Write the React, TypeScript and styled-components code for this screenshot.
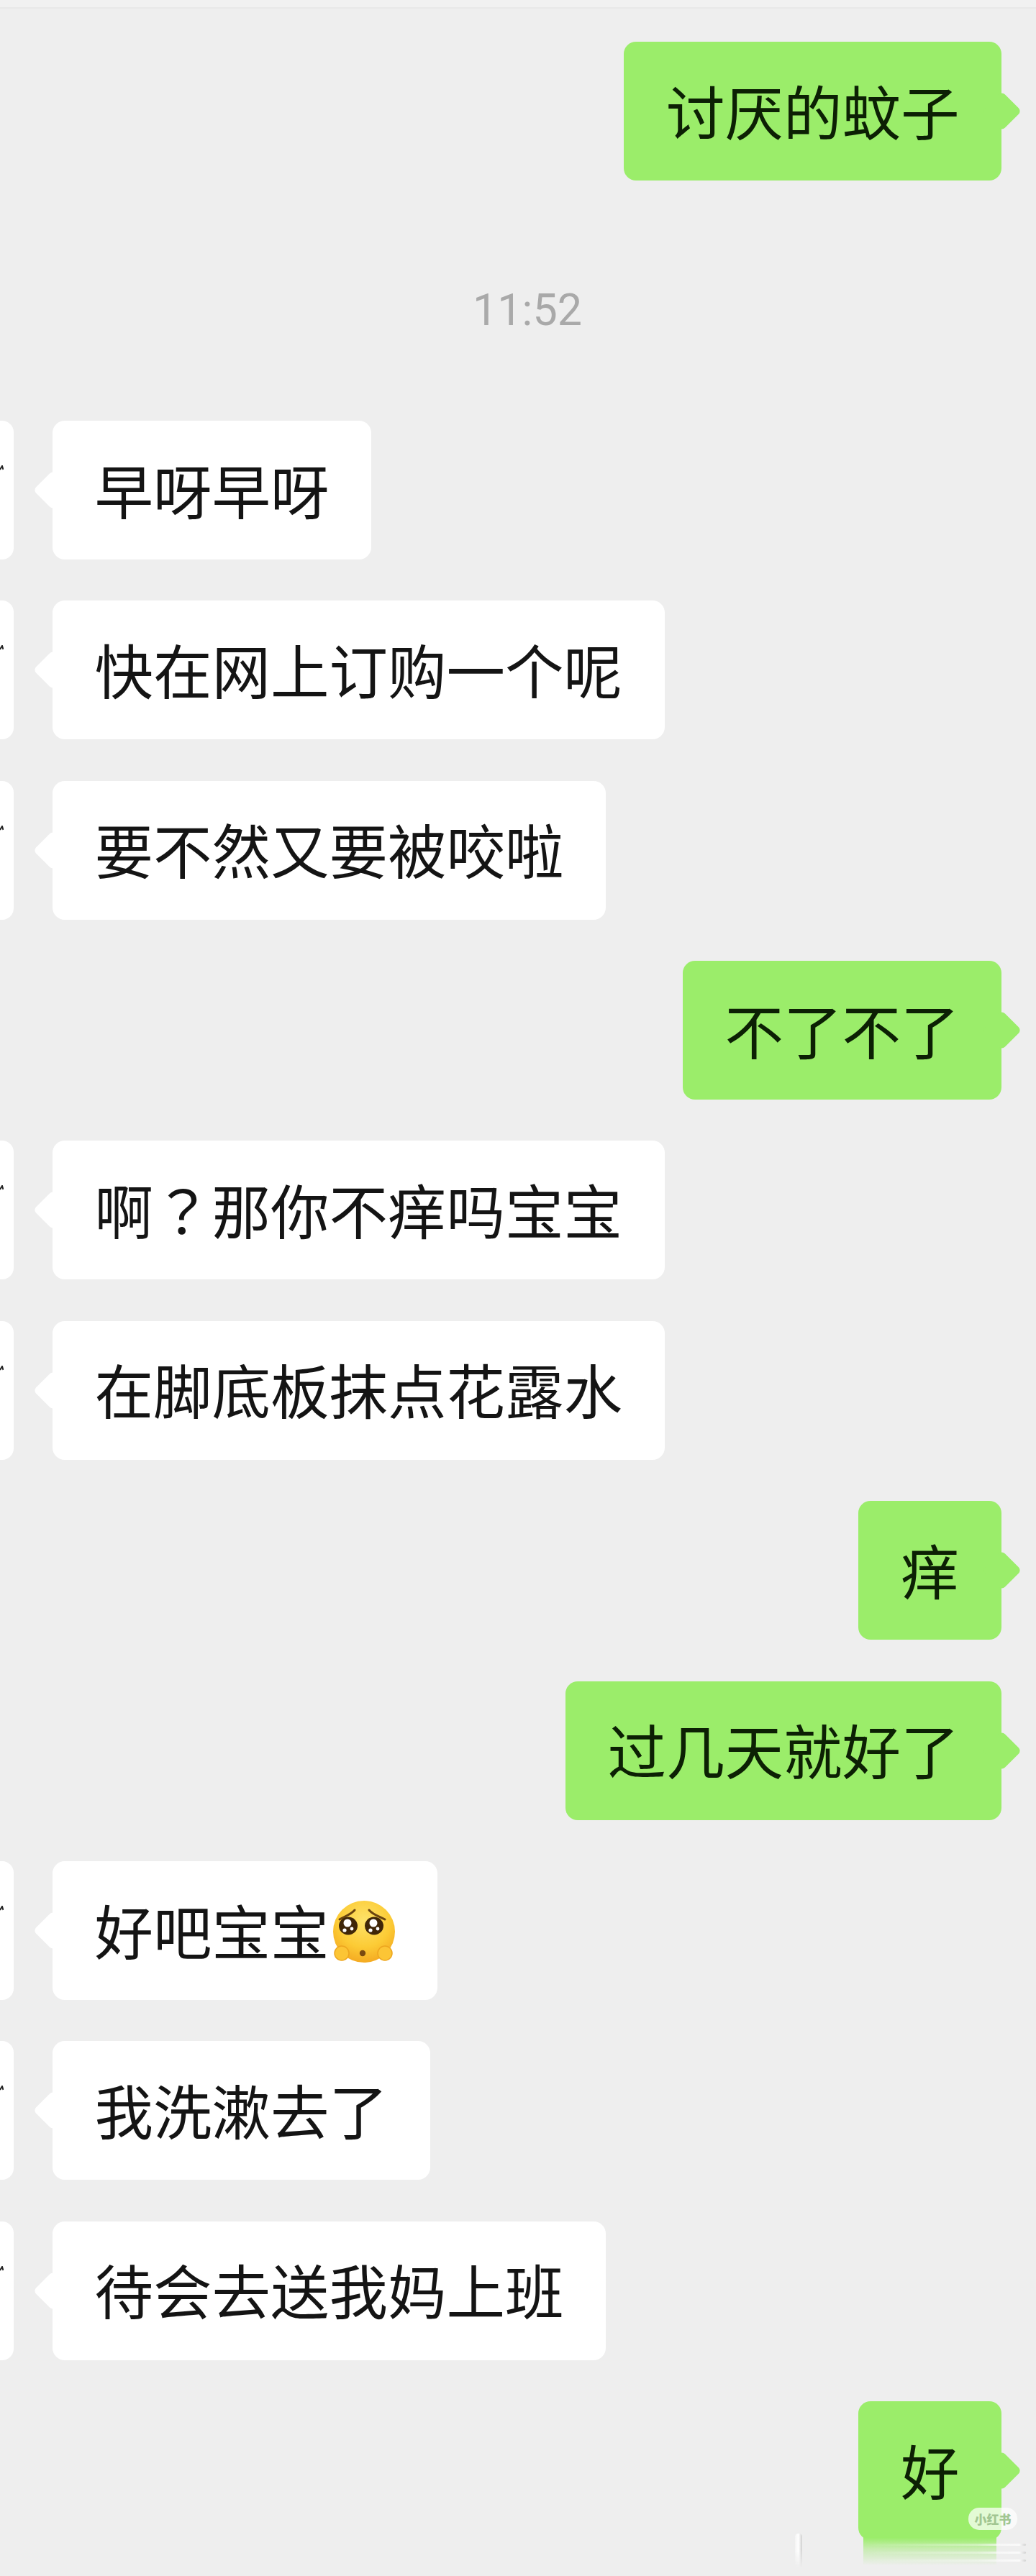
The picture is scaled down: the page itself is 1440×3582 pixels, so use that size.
import React from 'react';
import styled, { createGlobalStyle } from 'styled-components';

const Global = createGlobalStyle`
  html, body { margin: 0; padding: 0; background: #eeeeee; }
`;

const Page = styled.div`
  position: relative;
  width: 1440px;
  height: 3582px;
  overflow: hidden;
  background: #eeeeee;
  font-family: "Noto Sans CJK SC", "Noto Sans", sans-serif;
  display: flex;
  flex-direction: column;
`;

const TopEdge = styled.div`
  height: 10px;
  flex: none;
  background: #f1f1f1;
  border-bottom: 2px solid #e8e8e8;
`;

const Thread = styled.div`
  display: flex;
  flex-direction: column;
  gap: 57.4px;
  padding-top: 46px;
`;

const Row = styled.div<{ $mine?: boolean }>`
  display: flex;
  align-items: stretch;
  justify-content: ${(p) => (p.$mine ? 'flex-end' : 'flex-start')};
  padding-right: ${(p) => (p.$mine ? '48px' : '0')};
`;

const AvatarEdge = styled.div`
  position: relative;
  width: 19px;
  margin-right: 54px;
  background: #ffffff;
  border-radius: 0 16px 16px 0;
  flex: none;
`;

const AvatarMark = styled.svg`
  position: absolute;
  left: 0;
  top: 62px;
`;

const Bubble = styled.div<{ $mine?: boolean }>`
  position: relative;
  display: flex;
  align-items: center;
  height: 193px;
  box-sizing: border-box;
  padding: 0 58.5px 4px;
  border-radius: 17px;
  font-size: 81.5px;
  line-height: 1;
  white-space: nowrap;
  color: ${(p) => (p.$mine ? '#0c2004' : '#141414')};
  background: ${(p) => (p.$mine ? '#9bed6a' : '#ffffff')};

  &::after {
    content: '';
    position: absolute;
    top: 50%;
    width: 39px;
    height: 39px;
    margin-top: -19.5px;
    border-radius: 6px;
    transform: rotate(45deg);
    background: inherit;
    ${(p) => (p.$mine ? 'right: -19.5px;' : 'left: -19.5px;')}
  }
`;

const BubbleText = styled.span`
  position: relative;
  z-index: 1;
  filter: blur(0.5px);
`;

const CenteredMark = styled.span`
  font-family: "Noto Sans CJK TC", "Noto Sans CJK SC", sans-serif;
`;

const TimeRow = styled.div`
  height: 219px;
  display: flex;
  justify-content: center;
  padding: 100px 0 0 26px;
  box-sizing: border-box;
  font-family: Roboto, "Noto Sans", sans-serif;
  font-size: 61px;
  line-height: 46px;
  color: #a9a9a9;
  filter: blur(0.5px);
`;

const EmojiIcon = styled.svg`
  position: relative;
  z-index: 1;
  flex: none;
  margin-left: 5px;
  margin-right: 1px;
  margin-top: 8px;
`;

const Foot = styled.div`
  position: absolute;
  left: 7px;
  right: 7px;
  top: 186px;
  height: 46px;
  background: linear-gradient(#9bed6a 8%, #c8ecb2 42%, #eeeeee 92%);
`;

const Watermark = styled.div`
  position: absolute;
  left: 1346px;
  top: 3487px;
  width: 68px;
  height: 31px;
  display: flex;
  align-items: center;
  justify-content: center;
  border-radius: 15px;
  background: rgba(255, 255, 255, 0.72);
  color: #a2c692;
  font-size: 17px;
  font-weight: 900;
  line-height: 1;
  z-index: 3;
`;

const NavStick = styled.div`
  position: absolute;
  left: 1105px;
  top: 3523px;
  width: 10px;
  height: 47px;
  border-radius: 4px 4px 0 0;
  background: linear-gradient(90deg, #f4f4f4, #ffffff 50%, #cfcfcf);
  mask-image: linear-gradient(#000 50%, transparent);
  z-index: 3;
`;

const NavLines = styled.div`
  position: absolute;
  left: 1200px;
  top: 3537px;
  width: 226px;
  display: flex;
  flex-direction: column;
  gap: 8px;
  z-index: 3;
`;

const NavLine = styled.div`
  height: 3px;
  border-radius: 2px;
  background: linear-gradient(90deg, rgba(255, 255, 255, 0), rgba(255, 255, 255, 0.35) 70%, #fafafa 96%, #d2d2d2);
`;

const Emoji = () => (
  <EmojiIcon width="86" height="86" viewBox="0 0 86 86">
    <defs>
      <radialGradient id="face" cx="50%" cy="32%" r="72%">
        <stop offset="0%" stopColor="#fde36a" />
        <stop offset="60%" stopColor="#fccb35" />
        <stop offset="100%" stopColor="#f3a51f" />
      </radialGradient>
    </defs>
    <circle cx="43" cy="43" r="43" fill="url(#face)" />
    <circle cx="12" cy="73" r="10" fill="#fcc535" stroke="#eda61f" strokeWidth="1.5" />
    <circle cx="72" cy="73" r="10" fill="#fcc535" stroke="#eda61f" strokeWidth="1.5" />
    <path d="M9 26 C15 22 24 20 30 13" stroke="#6a4410" strokeWidth="3" fill="none" strokeLinecap="round" />
    <path d="M72 26 C65 22 56 20 50 13" stroke="#6a4410" strokeWidth="3" fill="none" strokeLinecap="round" />
    <ellipse cx="21" cy="35" rx="13" ry="12.5" fill="#3f2608" />
    <ellipse cx="57" cy="35" rx="13" ry="12.5" fill="#3f2608" />
    <circle cx="20" cy="31" r="5.5" fill="#ffffff" />
    <circle cx="56" cy="31" r="5.5" fill="#ffffff" />
    <circle cx="16" cy="41" r="2.6" fill="#ffffff" />
    <circle cx="52" cy="41" r="2.6" fill="#ffffff" />
    <circle cx="26" cy="39" r="2.4" fill="#ffffff" />
    <circle cx="62" cy="39" r="2.4" fill="#ffffff" />
    <circle cx="41" cy="73" r="4.2" fill="#7a4a10" />
  </EmojiIcon>
);

const Incoming = ({ children }: { children: React.ReactNode }) => (
  <Row>
    <AvatarEdge>
      <AvatarMark width="5" height="8" viewBox="0 0 5 8">
        <path d="M0 6 L3 1 L4.5 6" stroke="#222" strokeWidth="2" fill="none" />
      </AvatarMark>
    </AvatarEdge>
    <Bubble>{children}</Bubble>
  </Row>
);

const Outgoing = ({ children }: { children: React.ReactNode }) => (
  <Row $mine>
    <Bubble $mine>{children}</Bubble>
  </Row>
);

export default function App() {
  return (
    <Page>
      <Global />
      <TopEdge />
      <Thread>
        <Outgoing><BubbleText>讨厌的蚊子</BubbleText></Outgoing>
        <TimeRow>11:52</TimeRow>
        <Incoming><BubbleText>早呀早呀</BubbleText></Incoming>
        <Incoming><BubbleText>快在网上订购一个呢</BubbleText></Incoming>
        <Incoming><BubbleText>要不然又要被咬啦</BubbleText></Incoming>
        <Outgoing><BubbleText>不了不了</BubbleText></Outgoing>
        <Incoming><BubbleText>啊<CenteredMark>？</CenteredMark>那你不痒吗宝宝</BubbleText></Incoming>
        <Incoming><BubbleText>在脚底板抹点花露水</BubbleText></Incoming>
        <Outgoing><BubbleText>痒</BubbleText></Outgoing>
        <Outgoing><BubbleText>过几天就好了</BubbleText></Outgoing>
        <Incoming><BubbleText>好吧宝宝</BubbleText><Emoji /></Incoming>
        <Incoming><BubbleText>我洗漱去了</BubbleText></Incoming>
        <Incoming><BubbleText>待会去送我妈上班</BubbleText></Incoming>
        <Outgoing><BubbleText>好</BubbleText><Foot /></Outgoing>
      </Thread>
      <NavStick />
      <NavLines><NavLine /><NavLine /><NavLine /></NavLines>
      <Watermark>小红书</Watermark>
    </Page>
  );
}
